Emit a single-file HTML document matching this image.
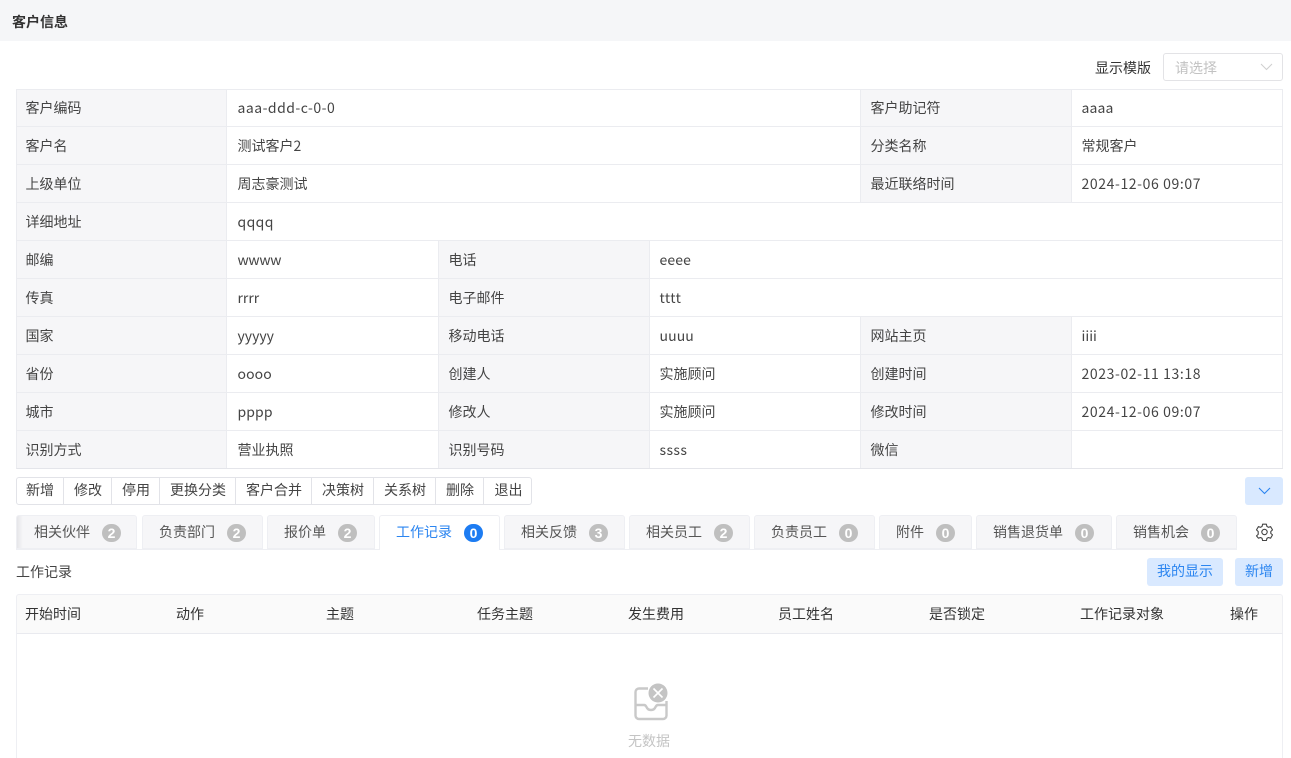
<!DOCTYPE html>
<html lang="zh"><head><meta charset="utf-8"><style>
*{box-sizing:border-box}
html,body{margin:0;padding:0;width:1291px;height:758px;overflow:hidden;background:#fff}
body{position:relative;font:14px/20px "Noto Sans CJK SC","Liberation Sans",sans-serif;color:#444}
.a{position:absolute;white-space:nowrap}
.c{position:absolute;border-right:1px solid #ebecf0;border-bottom:1px solid #ebecf0;padding-left:10.5px;line-height:39px;white-space:nowrap;letter-spacing:0;height:38px}
.l{background:#f6f6f8;padding-left:9.5px;letter-spacing:0;color:#444}
.f{padding-left:8.5px}
.v{padding-left:9.5px}
.d{letter-spacing:.6px}
.s1{letter-spacing:.1px}
.s4{letter-spacing:.4px}
.b{position:absolute;top:477px;height:28px;line-height:27px;text-align:center;border-right:1px solid #e2e3e8;color:#444;padding-left:1px}
.t{position:absolute;top:515px;height:34px;background:#f6f6f8;border:1px solid #eeeff3;border-radius:3px 3px 0 0;line-height:33px;color:#555;white-space:nowrap}
.t span{position:absolute;left:16px;top:0}
.t i{position:absolute;top:8px;height:18px;width:19px;border-radius:9px;background:#bfbfbf;color:#fff;font:bold 14px/18px "Liberation Sans",sans-serif;text-align:center}
.h{position:absolute;top:604px;color:#333;line-height:20px;white-space:nowrap}
.p{position:absolute;top:558px;height:28px;background:#d9e9ff;color:#2b85f0;border-radius:3px;text-align:center;line-height:27px}
</style></head><body>
<div class="a" style="left:0;top:0;width:1291px;height:41px;background:#f5f6f8"></div>
<div class="a" style="left:0;top:41px;width:1291px;height:10px;background:#fff;border-radius:3px 3px 0 0"></div>
<div class="a" style="left:12px;top:12px;font-weight:700;color:#333;font-size:14px">客户信息</div>
<div class="a" style="left:1095px;top:57.500px;color:#333">显示模版</div>
<div class="a" style="left:1163px;top:53px;width:120px;height:28px;border:1px solid #e3e3e6;border-radius:3px"></div>
<div class="a" style="left:1175px;top:57.500px;color:#c2c2c2">请选择</div>
<svg class="a" style="left:1260px;top:63px" width="13" height="8" viewBox="0 0 13 8"><path d="M1 1l5.5 5.5L12 1" fill="none" stroke="#cfcfcf" stroke-width="1"/></svg>

<div class="c l f" style="left:17px;top:89px;width:210px">客户编码</div><div class="c" style="left:227px;top:89px;width:634px;letter-spacing:.48px">aaa-ddd-c-0-0</div><div class="c l" style="left:861px;top:89px;width:211px">客户助记符</div><div class="c v s1" style="left:1072px;top:89px;width:211px">aaaa</div>
<div class="c l f" style="left:17px;top:127px;width:210px">客户名</div><div class="c" style="left:227px;top:127px;width:634px">测试客户2</div><div class="c l" style="left:861px;top:127px;width:211px">分类名称</div><div class="c v" style="left:1072px;top:127px;width:211px">常规客户</div>
<div class="c l f" style="left:17px;top:165px;width:210px">上级单位</div><div class="c" style="left:227px;top:165px;width:634px">周志豪测试</div><div class="c l" style="left:861px;top:165px;width:211px">最近联络时间</div><div class="c v d" style="left:1072px;top:165px;width:211px">2024-12-06 09:07</div>
<div class="c l f" style="left:17px;top:203px;width:210px">详细地址</div><div class="c s4" style="left:227px;top:203px;width:1056px">qqqq</div>
<div class="c l f" style="left:17px;top:241px;width:210px">邮编</div><div class="c" style="left:227px;top:241px;width:212px;letter-spacing:-.3px">wwww</div><div class="c l" style="left:439px;top:241px;width:211px">电话</div><div class="c v s1" style="left:650px;top:241px;width:633px">eeee</div>
<div class="c l f" style="left:17px;top:279px;width:210px">传真</div><div class="c" style="left:227px;top:279px;width:212px">rrrr</div><div class="c l" style="left:439px;top:279px;width:211px">电子邮件</div><div class="c v s4" style="left:650px;top:279px;width:633px">tttt</div>
<div class="c l f" style="left:17px;top:317px;width:210px">国家</div><div class="c" style="left:227px;top:317px;width:212px">yyyyy</div><div class="c l" style="left:439px;top:317px;width:211px">移动电话</div><div class="c v s1" style="left:650px;top:317px;width:211px">uuuu</div><div class="c l" style="left:861px;top:317px;width:211px">网站主页</div><div class="c v" style="left:1072px;top:317px;width:211px">iiii</div>
<div class="c l f" style="left:17px;top:355px;width:210px">省份</div><div class="c s1" style="left:227px;top:355px;width:212px">oooo</div><div class="c l" style="left:439px;top:355px;width:211px">创建人</div><div class="c v" style="left:650px;top:355px;width:211px">实施顾问</div><div class="c l" style="left:861px;top:355px;width:211px">创建时间</div><div class="c v d" style="left:1072px;top:355px;width:211px">2023-02-11 13:18</div>
<div class="c l f" style="left:17px;top:393px;width:210px">城市</div><div class="c s1" style="left:227px;top:393px;width:212px">pppp</div><div class="c l" style="left:439px;top:393px;width:211px">修改人</div><div class="c v" style="left:650px;top:393px;width:211px">实施顾问</div><div class="c l" style="left:861px;top:393px;width:211px">修改时间</div><div class="c v d" style="left:1072px;top:393px;width:211px">2024-12-06 09:07</div>
<div class="c l f" style="left:17px;top:431px;width:210px">识别方式</div><div class="c" style="left:227px;top:431px;width:212px">营业执照</div><div class="c l" style="left:439px;top:431px;width:211px">识别号码</div><div class="c v s4" style="left:650px;top:431px;width:211px">ssss</div><div class="c l" style="left:861px;top:431px;width:211px">微信</div><div class="c" style="left:1072px;top:431px;width:211px"></div>

<div class="a" style="left:16px;top:89px;width:1267px;height:380px;border-top:1px solid #ebecf0;border-left:1px solid #ebecf0;border-bottom:1px solid #e4e5ea"></div>

<div class="a" style="left:16px;top:477px;width:516px;height:28px;border:1px solid #e2e3e8;border-radius:3px"></div>
<div class="b" style="left:16px;width:48px">新增</div><div class="b" style="left:64px;width:48px">修改</div><div class="b" style="left:112px;width:48px">停用</div><div class="b" style="left:160px;width:76px">更换分类</div><div class="b" style="left:236px;width:76px">客户合并</div><div class="b" style="left:312px;width:62px">决策树</div><div class="b" style="left:374px;width:62px">关系树</div><div class="b" style="left:436px;width:48px">删除</div><div class="b" style="left:484px;width:48px;border:0">退出</div>

<div class="a" style="left:1245px;top:477px;width:38px;height:28px;background:#d9e9ff;border-radius:3px"></div>
<svg class="a" style="left:1258px;top:487px" width="13" height="8" viewBox="0 0 13 8"><path d="M1 1l5.5 5.5L12 1" fill="none" stroke="#2b85f0" stroke-width="1.1"/></svg>

<div class="a" style="left:16px;top:549px;width:1221px;height:1px;background:#eeeff3"></div>
<div class="t" style="left:16px;width:121px;background:linear-gradient(90deg,#e6e6e9 0,#f6f6f8 6px)"><span style="left:17px">相关伙伴</span><i style="left:85px">2</i></div>
<div class="t" style="left:142px;width:121px"><span>负责部门</span><i style="left:84px">2</i></div>
<div class="t" style="left:267px;width:108px"><span>报价单</span><i style="left:70px">2</i></div>
<div class="t" style="left:379px;width:121px;height:35px;background:#fff;color:#2b85f0;border-bottom:0"><span>工作记录</span><i style="left:84px;background:#1d7cf2">0</i></div>
<div class="t" style="left:504px;width:121px"><span>相关反馈</span><i style="left:84px">3</i></div>
<div class="t" style="left:629px;width:121px"><span>相关员工</span><i style="left:84px">2</i></div>
<div class="t" style="left:754px;width:121px"><span>负责员工</span><i style="left:84px">0</i></div>
<div class="t" style="left:879px;width:93px"><span>附件</span><i style="left:56px">0</i></div>
<div class="t" style="left:976px;width:136px"><span>销售退货单</span><i style="left:98px">0</i></div>
<div class="t" style="left:1116px;width:121px"><span>销售机会</span><i style="left:84px">0</i></div>
<svg class="a" style="left:1255.500px;top:523px" width="17" height="18" viewBox="0 0 17 18"><path d="M6.6 1.2h3.8l.5 2.2 1.5.9 2.2-.7 1.9 3.3-1.7 1.6v1.9l1.7 1.5-1.9 3.3-2.2-.7-1.5.9-.5 2.2H6.6l-.5-2.2-1.5-.9-2.2.7L.5 12.900l1.700-1.500V8.500L.5 6.900l1.900-3.300 2.200.7 1.500-.9z" fill="none" stroke="#444" stroke-width="1.100" stroke-linejoin="round"/><circle cx="8.500" cy="9" r="2.700" fill="none" stroke="#444" stroke-width="1.100"/></svg>

<div class="a" style="left:16px;top:562px;color:#444">工作记录</div>
<div class="p" style="left:1147px;width:76px">我的显示</div>
<div class="p" style="left:1235px;width:48px">新增</div>

<div class="a" style="left:16px;top:594px;width:1267px;height:40px;background:#fafafa;border:1px solid #eeeff3;border-bottom-color:#e9eaef;border-radius:3px 3px 0 0"></div>
<div class="a" style="left:16px;top:634px;width:1267px;height:124px;border-left:1px solid #eeeff3;border-right:1px solid #eeeff3"></div>
<div class="h" style="left:25px">开始时间</div><div class="h" style="left:176px">动作</div><div class="h" style="left:326px">主题</div><div class="h" style="left:477px">任务主题</div><div class="h" style="left:628px">发生费用</div><div class="h" style="left:778px">员工姓名</div><div class="h" style="left:929px">是否锁定</div><div class="h" style="left:1080px">工作记录对象</div><div class="h" style="left:1230px">操作</div>

<svg class="a" style="left:630px;top:680px" width="40" height="44" viewBox="0 0 40 44"><path d="M18 8.500H9a3.500 3.500 0 0 0-3.500 3.500v23.500A3.500 3.500 0 0 0 9 39h24a3.500 3.500 0 0 0 3.500-3.500V21" fill="none" stroke="#c9c9c9" stroke-width="2.400"/><path d="M5.500 25h8.500c1.500 0 2 1 2.500 2 .8 2 2.500 3 4.500 3s3.700-1 4.500-3c.5-1 1-2 2.500-2h8.500" fill="none" stroke="#c9c9c9" stroke-width="2.400"/><circle cx="28" cy="13" r="10" fill="#fff"/><circle cx="28" cy="13" r="9.500" fill="#c4c4c4"/><path d="M23.500 8.500l9 9M32.500 8.500l-9 9" stroke="#fff" stroke-width="1.600"/></svg>
<div class="a" style="left:628px;top:731px;color:#c4c4c4">无数据</div>
</body></html>
